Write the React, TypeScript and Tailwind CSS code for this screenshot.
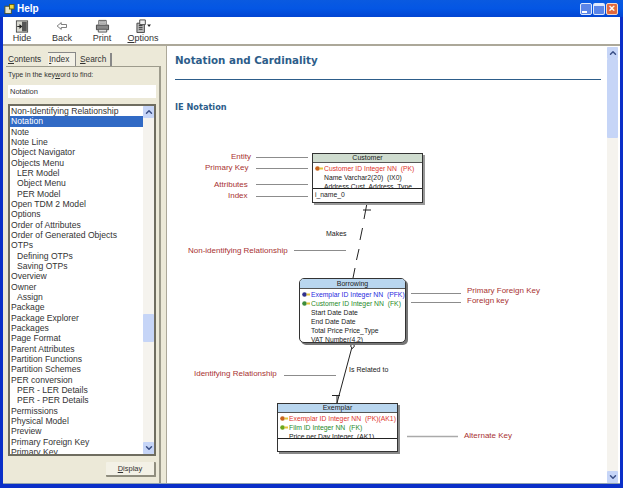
import { ChevronDown, ChevronUp } from "lucide-react";

const indexItems = [
  { label: "Non-Identifying Relationship" },
  { label: "Notation", selected: true },
  { label: "Note" },
  { label: "Note Line" },
  { label: "Object Navigator" },
  { label: "Objects Menu" },
  { label: "LER Model", sub: true },
  { label: "Object Menu", sub: true },
  { label: "PER Model", sub: true },
  { label: "Open TDM 2 Model" },
  { label: "Options" },
  { label: "Order of Attributes" },
  { label: "Order of Generated Objects" },
  { label: "OTPs" },
  { label: "Defining OTPs", sub: true },
  { label: "Saving OTPs", sub: true },
  { label: "Overview" },
  { label: "Owner" },
  { label: "Assign", sub: true },
  { label: "Package" },
  { label: "Package Explorer" },
  { label: "Packages" },
  { label: "Page Format" },
  { label: "Parent Attributes" },
  { label: "Partition Functions" },
  { label: "Partition Schemes" },
  { label: "PER conversion" },
  { label: "PER - LER Details", sub: true },
  { label: "PER - PER Details", sub: true },
  { label: "Permissions" },
  { label: "Physical Model" },
  { label: "Preview" },
  { label: "Primary Foreign Key" },
  { label: "Primary Key" },
];

function ScrollArrow({ down }: { down?: boolean }) {
  return (
    <div className="flex h-[12px] w-[11px] shrink-0 items-center justify-center rounded-[1px] bg-[#c6d5f7] text-[#3a4f86]">
      {down ? <ChevronDown className="h-[10px] w-[10px]" strokeWidth={3.5} /> : <ChevronUp className="h-[10px] w-[10px]" strokeWidth={3.5} />}
    </div>
  );
}

function HideIcon() {
  return (
    <svg width="14" height="13" viewBox="0 0 16 15" fill="none">
      <rect x="1.5" y="1" width="13" height="13" fill="#d8d8d0" stroke="#444" />
      <rect x="8" y="2" width="5.5" height="11" fill="#555" />
      <path d="M2.5 7.5h5M5 5.5l2.5 2-2.5 2" stroke="#222" strokeWidth="1.2" />
    </svg>
  );
}

function BackIcon() {
  return (
    <svg width="12" height="10" viewBox="0 0 16 12" fill="none">
      <path d="M1.5 6 7 1.500V4h7v4H7v2.500z" fill="#fff" stroke="#555" />
    </svg>
  );
}

function PrintIcon() {
  return (
    <svg width="15" height="14" viewBox="0 0 16 15" fill="none">
      <path d="M4 6V1.500h8V6" fill="#eee" stroke="#555" />
      <path d="M1.500 6.500h13v5h-13z" fill="#888" stroke="#444" />
      <path d="M3.500 11h9v3h-9z" fill="#ddd" stroke="#555" />
      <path d="M5 3h6M5 4.500h6" stroke="#888" />
    </svg>
  );
}

function OptionsIcon() {
  return (
    <svg width="16" height="14" viewBox="0 0 17 15" fill="none">
      <path d="M2 4.500h8v10H2z" fill="#bbb" stroke="#444" />
      <path d="M5 1h6v5H5z" fill="#eee" stroke="#444" />
      <path d="M4 7h4M4 9h4M4 11h4" stroke="#333" />
      <path d="M13 6h4l-2 2.500z" fill="#222" />
    </svg>
  );
}

function ToolButton({ icon, label, className }: { icon: React.ReactNode; label: React.ReactNode; className: string }) {
  return (
    <div className={`flex flex-col items-center ${className}`}>
      <div className="flex h-[14px] items-center">{icon}</div>
      <span className="text-[9px] leading-[11px] text-[#333]">{label}</span>
    </div>
  );
}

function KeyIcon({ color }: { color: string }) {
  return (
    <svg className="absolute left-[2px] top-[2px]" width="8" height="5" viewBox="0 0 8 5">
      <circle cx="2.500" cy="2.500" r="2.300" fill={color} />
      <rect x="4.500" y="1.500" width="3.500" height="2" fill="#e3c53a" />
    </svg>
  );
}

function Label({ className, children }: { className: string; children: React.ReactNode }) {
  return <span className={`absolute whitespace-nowrap text-[8px] leading-[10px] text-[#a83232] ${className}`}>{children}</span>;
}

function Row({ color, keyColor, children }: { color?: string; keyColor?: string; children: React.ReactNode }) {
  return (
    <div className={`relative h-[9px] whitespace-pre pl-[11px] text-[6.8px] leading-[9px] ${color ?? "text-[#222]"}`}>
      {keyColor && <KeyIcon color={keyColor} />}
      {children}
    </div>
  );
}

function Diagram() {
  return (
    <div className="relative mt-[8px] h-[360px] w-[441px] shrink-0">
      <svg className="absolute left-0 top-0" width="441" height="360" fill="none">
        <g stroke="#8c8c8c" strokeWidth="1">
          <path d="M89 37.500h52M89 48.500h52M89 64.500h52M89 76.500h52" />
          <path d="M127 130.500h52" />
          <path d="M244 173.500h50M244 182.500h50" />
          <path d="M117 255.500h52" />
          <path d="M240 316.500h51" strokeWidth="1.500" stroke="#aaa" />
        </g>
        <g stroke="#222" strokeWidth="1">
          <path d="M200 83 197 99" />
          <path d="M196 90h8" />
          <path d="M195.500 108 193 120M192 129 189.500 140M188 148 186 158" />
          <path d="M185 158 181 169M185 158l3 11M185 158v11" />
          <path d="M185 227 170 283" />
          <path d="M165 275.500h8M170 275v8" />
          <path d="M185.500 223.500l2 2.500-2 2.500-2-2.500z" fill="#fff" />
        </g>
      </svg>

      <Label className="left-[64px] top-[32px]">Entity</Label>
      <Label className="left-[38px] top-[43px]">Primary Key</Label>
      <Label className="left-[47px] top-[60px]">Attributes</Label>
      <Label className="left-[61px] top-[71px]">Index</Label>
      <Label className="left-[21px] top-[126px]">Non-identifying Relationship</Label>
      <Label className="left-[27px] top-[249px]">Identifying Relationship</Label>
      <Label className="left-[300px] top-[166px]">Primary Foreign Key</Label>
      <Label className="left-[300px] top-[176px]">Foreign key</Label>
      <Label className="left-[297px] top-[311px]">Alternate Key</Label>

      <span className="absolute left-[159px] top-[109px] text-[7px] leading-[10px] text-[#222]">Makes</span>
      <span className="absolute left-[182px] top-[245px] text-[7px] leading-[10px] text-[#222]">Is Related to</span>

      <div className="absolute left-[145px] top-[33px] h-[50px] w-[111px] border border-[#333] bg-white shadow-[2px_2px_0_#999]">
        <div className="h-[9px] border-b border-[#555] bg-[#cfdccf] text-center text-[7px] leading-[8px] text-[#222]">Customer</div>
        <div className="h-[26px] overflow-hidden border-b border-[#222] pt-[1px]">
          <Row color="text-[#e0342c]" keyColor="#c8641e">{"Customer ID Integer NN  (PK)"}</Row>
          <Row>{"Name Varchar2(20)  (IX0)"}</Row>
          <Row>Address Cust_Address_Type</Row>
        </div>
        <div className="pl-[2px] pt-[1px] text-[6.8px] leading-[9px] text-[#222]">i_name_0</div>
      </div>

      <div className="absolute left-[132px] top-[158px] h-[65px] w-[107px] overflow-hidden rounded-[5px] border border-[#333] bg-white shadow-[2px_2px_0_#777]">
        <div className="h-[10px] border-b border-[#555] bg-[#b9d6ef] text-center text-[7px] leading-[9px] text-[#222]">Borrowing</div>
        <div className="pt-[1px]">
          <Row color="text-[#2a2ae0]" keyColor="#30308c">{"Exemplar ID Integer NN  (PFK)"}</Row>
          <Row color="text-[#1f8a2a]" keyColor="#3c8c3c">{"Customer ID Integer NN  (FK)"}</Row>
          <Row>Start Date Date</Row>
          <Row>End Date Date</Row>
          <Row>Total Price Price_Type</Row>
          <Row>VAT Number(4,2)</Row>
        </div>
      </div>

      <div className="absolute left-[110px] top-[283px] h-[49px] w-[121px] border border-[#333] bg-white shadow-[2px_2px_0_#888]">
        <div className="h-[9px] border-b border-[#555] bg-[#b9d6ef] text-center text-[7px] leading-[8px] text-[#222]">Exemplar</div>
        <div className="h-[26px] overflow-hidden border-b border-[#222] pt-[1px]">
          <Row color="text-[#e0342c]" keyColor="#c8641e">{"Exemplar ID Integer NN  (PK)(AK1)"}</Row>
          <Row color="text-[#1f8a2a]" keyColor="#6aa81e">{"Film ID Integer NN  (FK)"}</Row>
          <Row>{"Price per Day Integer  (AK1)"}</Row>
        </div>
      </div>
    </div>
  );
}

export default function App() {
  return (
    <div className="flex h-[488px] w-[623px] flex-col overflow-hidden bg-[#0a2fc8] font-['Liberation_Sans',sans-serif]">
      {/* title bar */}
      <div className="flex h-[17px] shrink-0 items-center bg-gradient-to-b from-[#0a5ae0] via-[#0456e4] to-[#0345d2] pl-[4px] pr-[5px]">
        <svg width="11" height="12" viewBox="0 0 12 12">
          <rect x="1" y="3" width="7" height="8" fill="#e9e4c8" stroke="#47502a" />
          <rect x="6" y="1" width="5" height="5" fill="#f0d840" stroke="#5d5a10" />
        </svg>
        <span className="ml-[2px] text-[10px] font-bold text-white">Help</span>
        <div className="ml-auto flex gap-[1px]">
          <div className="relative h-[12px] w-[12px] rounded-[2px] border border-[#dfe8fb] bg-[#5a85e8]">
            <div className="absolute bottom-[1px] left-[1px] h-[2px] w-[5px] bg-white" />
          </div>
          <div className="h-[12px] w-[12px] rounded-[2px] border border-[#dfe8fb] border-t-[3px] bg-[#5a85e8]" />
          <div className="flex h-[12px] w-[12px] items-center justify-center rounded-[2px] border border-[#f4d8c8] bg-[#e2683c] text-[11px] font-bold leading-none text-white">×</div>
        </div>
      </div>

      <div className="flex min-h-0 flex-1 flex-col pb-[4px] pl-[3px] pr-[3px]">
        {/* toolbar */}
        <div className="flex h-[29px] shrink-0 items-start border-b-2 border-[#aca899] bg-white pt-[2px]">
          <ToolButton className="ml-[9px] w-[20px]" icon={<HideIcon />} label="Hide" />
          <ToolButton className="ml-[19px] w-[22px]" icon={<BackIcon />} label="Back" />
          <ToolButton className="ml-[19px] w-[20px]" icon={<PrintIcon />} label="Print" />
          <ToolButton className="ml-[15px] w-[32px]" icon={<OptionsIcon />} label={<><u>O</u>ptions</>} />
        </div>

        <div className="flex min-h-0 flex-1">
          {/* left pane */}
          <div className="flex w-[163px] shrink-0 flex-col bg-[#ece9d8] pl-[3px] pr-[5px] pt-[6px]">
            <div className="flex h-[14px] items-end pl-[2px] text-[8.3px] leading-[12px] text-[#333]">
              <span className="h-[13px] w-[33px]"><u>C</u>ontents</span>
              <span className="ml-[7px] h-[14px] w-[28px] border-r border-t border-[#888] bg-[#f3f1e6] pl-px"><u>I</u>ndex</span>
              <span className="ml-[4px] h-[13px] w-[32px] border-r-2 border-[#888]"><u>S</u>earch</span>
            </div>
            <div className="flex min-h-0 flex-1 flex-col border-r-2 border-t border-[#9d9b8c] pl-[2px] pr-[3px] pt-[2px]">
              <div className="h-[11px] text-[7px] leading-[11px] text-[#333]">Type in the key<u>w</u>ord to find:</div>
              <div className="mt-[5px] h-[13px] bg-white pl-[2px] text-[7.5px] leading-[13px] text-[#333]">Notation</div>
              <div className="mt-[6px] flex h-[352px] border-2 border-[#6f6d60] bg-white">
                <div className="min-w-0 flex-1 overflow-hidden">
                  {indexItems.map((item) => (
                    <div
                      key={item.label}
                      className={`h-[10.33px] whitespace-nowrap text-[8.6px] leading-[10.33px] ${item.sub ? "pl-[7px]" : "pl-px"} ${item.selected ? "bg-[#316ac5] text-white" : "text-[#333]"}`}
                    >
                      {item.label}
                    </div>
                  ))}
                </div>
                <div className="flex w-[11px] shrink-0 flex-col bg-[#f5f3ee]">
                  <ScrollArrow />
                  <div className="mt-[196px] h-[28px] rounded-[1px] bg-[#c6d5f7]" />
                  <div className="mt-auto"><ScrollArrow down /></div>
                </div>
              </div>
              <div className="mt-[6px] flex justify-end">
                <div className="flex h-[15px] w-[50px] items-center justify-center rounded-[1px] border-b-2 border-r-2 border-[#8f8d7e] bg-[#f3f1e6] text-[7.5px] text-[#333]"><u>D</u>isplay</div>
              </div>
            </div>
          </div>

          {/* topic pane */}
          <div className="flex min-w-0 flex-1 border-l border-[#aca899] bg-white">
            <div className="min-w-0 flex-1 overflow-hidden">
              <div className="ml-[8px] mt-[7px] font-['DejaVu_Sans',sans-serif] text-[10.3px] font-bold leading-[14px] text-[#2d5d8a]">Notation and Cardinality</div>
              <div className="ml-[8px] mr-[6px] mt-[12px] h-px bg-[#2d5d8a]" />
              <div className="ml-[8px] mt-[22px] font-['DejaVu_Sans',sans-serif] text-[8.2px] font-bold leading-[10px] text-[#2d5d8a]">IE Notation</div>
              <Diagram />
            </div>
            <div className="mr-[2px] mt-px flex h-[436px] w-[11px] shrink-0 flex-col bg-[#f5f3ee]">
              <ScrollArrow />
              <div className="h-[79px] rounded-[1px] bg-[#c6d5f7]" />
              <div className="mt-auto"><ScrollArrow down /></div>
            </div>
          </div>
        </div>
        <div className="h-px shrink-0 bg-[#8fa2b0]" />
      </div>
    </div>
  );
}
